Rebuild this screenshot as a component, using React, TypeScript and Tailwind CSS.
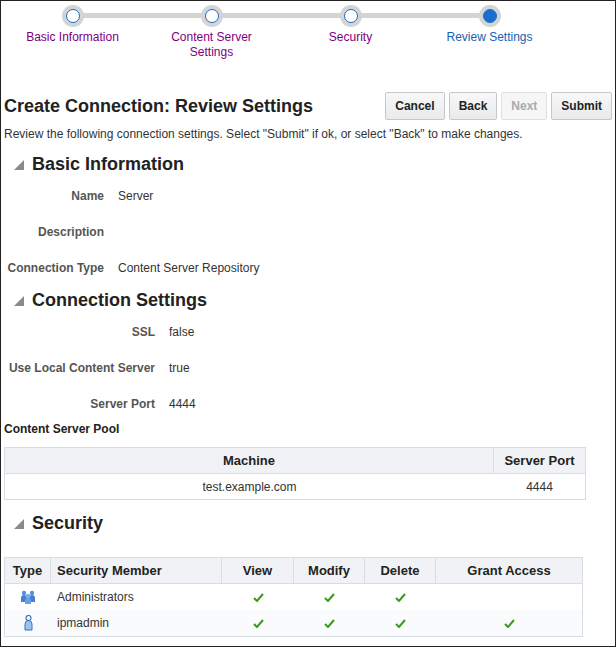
import React from "react";

const Tri = () => (
  <svg width="10" height="10" viewBox="0 0 10 10" className="mr-2"><polygon points="10,0 10,10 0,10" fill="#8a8a8a" /></svg>
);
const Check = () => (
  <svg width="11" height="9" viewBox="0 0 11 9"><path d="M1 5 L4 8 L10 1" stroke="#3a9a1a" strokeWidth="2" fill="none" /></svg>
);
const Group = () => (
  <svg width="16" height="14" viewBox="0 0 16 14">
    <circle cx="4" cy="3" r="2.2" fill="#5a8fd8" /><circle cx="12" cy="3" r="2.2" fill="#5a8fd8" />
    <path d="M1 12 V8 a3 3 0 0 1 6 0 V12Z" fill="#4a7fcc" /><path d="M9 12 V8 a3 3 0 0 1 6 0 V12Z" fill="#4a7fcc" />
    <circle cx="8" cy="6" r="2.3" fill="#7ab0ee" /><path d="M5 14 V11 a3 3 0 0 1 6 0 V14Z" fill="#6aa0e6" />
  </svg>
);
const User = () => (
  <svg width="9" height="16" viewBox="0 0 9 16">
    <circle cx="4.5" cy="3" r="2.5" fill="none" stroke="#3a70c0" strokeWidth="1.2" />
    <path d="M1 15 V9 a3.5 3.5 0 0 1 7 0 V15Z" fill="#9cc4f0" stroke="#3a70c0" strokeWidth="1" />
  </svg>
);

const steps = [
  { l: ["Basic Information"], c: "text-[#800080]" },
  { l: ["Content Server", "Settings"], c: "text-[#800080]" },
  { l: ["Security"], c: "text-[#800080]" },
  { l: ["Review Settings"], c: "text-[#1a62b0]" },
];

export default function App() {
  const f = { fontFamily: "'Liberation Sans', Arial, sans-serif" };
  return (
    <div style={f} className="w-[616px] h-[647px] border border-[#222] bg-white text-[#333] text-[12px] overflow-hidden">
      <div className="relative h-[70px]">
        <div className="absolute left-[72px] w-[417px] top-[12px] h-[5px] bg-[#d4d4d4]" />
        <div className="flex pl-[2px] pt-[4px]">
          {steps.map((s, i) => (
            <div key={i} className="w-[139px] flex flex-col items-center relative">
              <div className="w-[22px] h-[22px] rounded-full bg-[#d4d4d4] flex items-center justify-center">
                <div className={`w-[14px] h-[14px] rounded-full border-[1.5px] border-[#1a6ed0] ${i === 3 ? "bg-[#1a6ed0]" : "bg-white"}`} />
              </div>
              <div className={`mt-[3px] text-center leading-[15px] ${s.c}`}>{s.l.map((t) => <div key={t}>{t}</div>)}</div>
            </div>
          ))}
        </div>
      </div>
      <div className="flex items-center justify-between pl-[3px] pr-[3px] mt-[21px]">
        <div className="text-[18px] font-bold text-[#222]">Create Connection: Review Settings</div>
        <div className="flex gap-[4px] text-[12px] font-bold">
          {["Cancel", "Back", "Next", "Submit"].map((b) => (
            <div key={b} className={`h-[28px] px-[9px] flex items-center rounded-[2px] border ${b === "Next" ? "border-[#e0e0e0] bg-[#f6f6f6] text-[#aaa]" : "border-[#c4c8cc] bg-gradient-to-b from-[#f8f8f8] to-[#e8eaec] text-[#222]"}`}>{b}</div>
          ))}
        </div>
      </div>
      <div className="pl-[3px] mt-[5px]">Review the following connection settings. Select "Submit" if ok, or select "Back" to make changes.</div>
      <div className="flex items-center pl-[13px] mt-[8px] text-[18px] font-bold text-[#222]"><Tri />Basic Information</div>
      {[["Name", "Server"], ["Description", ""], ["Connection Type", "Content Server Repository"]].map(([a, b]) => (
        <div key={a} className="flex h-[36px] items-center"><div className="w-[103px] text-right font-bold text-[#555]">{a}</div><div className="ml-[14px]">{b}</div></div>
      ))}
      <div className="flex items-center pl-[13px] mt-[1px] text-[18px] font-bold text-[#222]"><Tri />Connection Settings</div>
      {[["SSL", "false"], ["Use Local Content Server", "true"], ["Server Port", "4444"]].map(([a, b]) => (
        <div key={a} className="flex h-[36px] items-center"><div className="w-[154px] text-right font-bold text-[#555]">{a}</div><div className="ml-[14px]">{b}</div></div>
      ))}
      <div className="pl-[3px] font-bold text-[#222] mt-[-2px]">Content Server Pool</div>
      <div className="ml-[3px] mt-[9px] w-[582px] border border-[#d6dde5]">
        <div className="flex h-[26px] bg-[#f0f2f5] font-bold text-[13px] text-[#222] border-b border-[#d6dde5]">
          <div className="w-[489px] flex items-center justify-center border-r border-[#d6dde5]">Machine</div>
          <div className="flex-1 flex items-center justify-center">Server Port</div>
        </div>
        <div className="flex h-[25px] items-center"><div className="w-[489px] text-center">test.example.com</div><div className="flex-1 text-center">4444</div></div>
      </div>
      <div className="flex items-center pl-[13px] mt-[10px] text-[18px] font-bold text-[#222]"><Tri />Security</div>
      <div className="ml-[3px] mt-[20px] w-[579px] border border-[#d6dde5]">
        <div className="flex h-[26px] bg-[#f0f2f5] font-bold text-[13px] text-[#222] border-b border-[#d6dde5]">
          <div className="w-[46px] flex items-center justify-center border-r border-[#d6dde5]">Type</div>
          <div className="w-[171px] flex items-center pl-[6px] border-r border-[#d6dde5]">Security Member</div>
          <div className="w-[72px] flex items-center justify-center border-r border-[#d6dde5]">View</div>
          <div className="w-[71px] flex items-center justify-center border-r border-[#d6dde5]">Modify</div>
          <div className="w-[71px] flex items-center justify-center border-r border-[#d6dde5]">Delete</div>
          <div className="flex-1 flex items-center justify-center">Grant Access</div>
        </div>
        {[["Administrators", false], ["ipmadmin", true]].map(([n, g], i) => (
          <div key={String(n)} className={`flex h-[26px] items-center ${i === 1 ? "bg-[#fafbfc]" : ""}`}>
            <div className="w-[46px] flex justify-center">{i === 0 ? <Group /> : <User />}</div>
            <div className="w-[171px] pl-[6px]">{n}</div>
            <div className="w-[72px] flex justify-center"><Check /></div>
            <div className="w-[71px] flex justify-center"><Check /></div>
            <div className="w-[71px] flex justify-center"><Check /></div>
            <div className="flex-1 flex justify-center">{g ? <Check /> : null}</div>
          </div>
        ))}
      </div>
    </div>
  );
}
